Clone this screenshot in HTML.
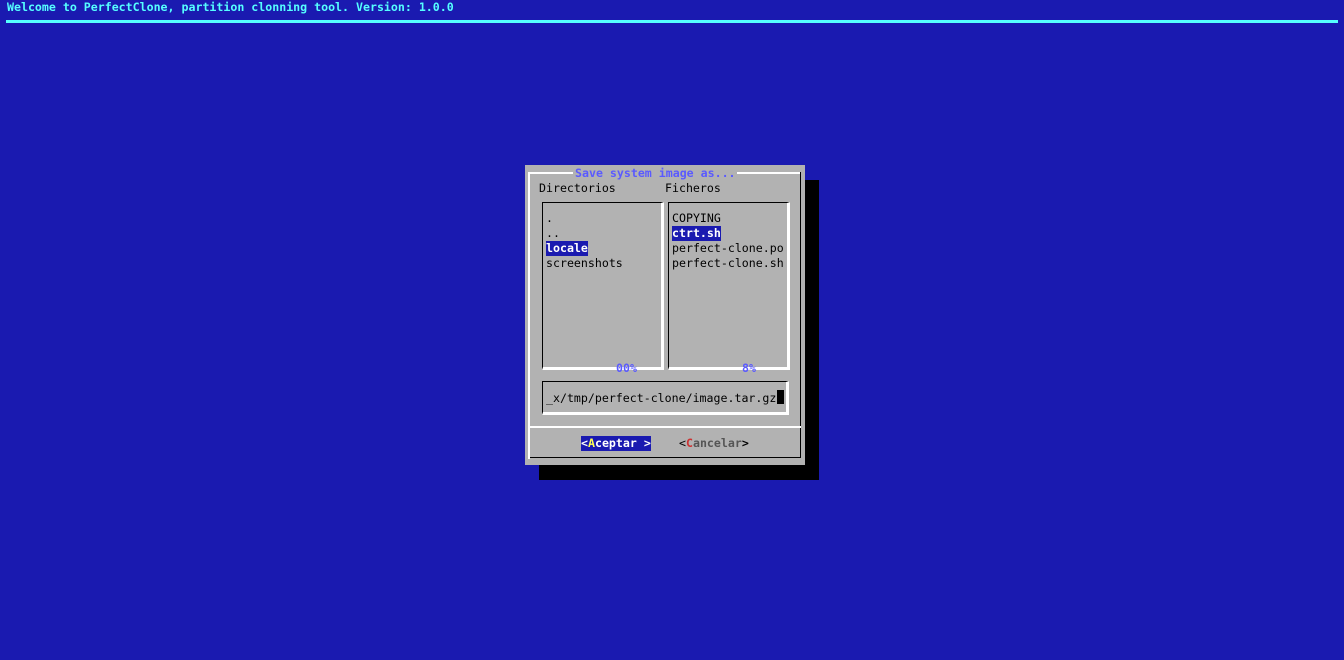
<!DOCTYPE html>
<html><head><meta charset="utf-8"><style>
html,body{margin:0;padding:0}
body{width:1344px;height:660px;background:#1a1ab0;position:relative;overflow:hidden;font-family:"DejaVu Sans Mono","Liberation Mono",monospace;font-size:11.6px;line-height:15px}
.a{position:absolute;white-space:pre}
.b{position:absolute}
.t{color:#000}
</style></head><body>
<div class="a" style="left:7px;top:0;color:#5ff;font-weight:bold">Welcome to PerfectClone, partition clonning tool. Version: 1.0.0</div>
<div class="b" style="left:6px;top:20px;width:1332px;height:3px;background:#5ff"></div>

<div class="b" style="left:539px;top:180px;width:280px;height:300px;background:#000"></div>
<div class="b" style="left:525px;top:165px;width:280px;height:300px;background:#b2b2b2"></div>
<div class="b" style="left:528px;top:172px;width:273px;height:2px;background:#fff"></div>
<div class="b" style="left:528px;top:172px;width:2px;height:287px;background:#fff"></div>
<div class="b" style="left:800px;top:172px;width:1px;height:286px;background:#000"></div>
<div class="b" style="left:530px;top:457px;width:271px;height:1px;background:#000"></div>
<div class="a" style="left:573px;top:166px;padding:0 1px 0 2px;background:#b2b2b2;color:#5a5aff;font-weight:bold">Save system image as...</div>
<div class="a t" style="left:539px;top:181px">Directorios</div>
<div class="a t" style="left:665px;top:181px">Ficheros</div>
<div class="b" style="left:542px;top:202px;width:118px;height:164px;border-left:1px solid #000;border-top:1px solid #000;border-right:3px solid #fff;border-bottom:3px solid #fff"></div>
<div class="b" style="left:668px;top:202px;width:118px;height:164px;border-left:1px solid #000;border-top:1px solid #000;border-right:3px solid #fff;border-bottom:3px solid #fff"></div>
<div class="a t" style="left:546px;top:211px">.
..</div>
<div class="a" style="left:546px;top:241px;background:#1a1ab0;color:#fff;font-weight:bold">locale</div>
<div class="a t" style="left:546px;top:256px">screenshots</div>
<div class="a t" style="left:672px;top:211px">COPYING</div>
<div class="a" style="left:672px;top:226px;background:#1a1ab0;color:#fff;font-weight:bold">ctrt.sh</div>
<div class="a t" style="left:672px;top:241px">perfect-clone.po
perfect-clone.sh</div>
<div class="a" style="left:616px;top:361px;color:#5a5aff;font-weight:bold">00%</div>
<div class="a" style="left:742px;top:361px;color:#5a5aff;font-weight:bold">8%</div>
<div class="b" style="left:542px;top:381px;width:243px;height:30px;border-left:1px solid #000;border-top:1px solid #000;border-right:3px solid #fff;border-bottom:3px solid #fff"></div>
<div class="a t" style="left:546px;top:391px">_x/tmp/perfect-clone/image.tar.gz</div>
<div class="b" style="left:777px;top:390px;width:7px;height:14px;background:#000"></div>
<div class="b" style="left:530px;top:426px;width:271px;height:2px;background:#fff"></div>
<div class="a" style="left:581px;top:436px;background:#1a1ab0;color:#fff;font-weight:bold">&lt;<span style="color:#ff5">A</span>ceptar &gt;</div>
<div class="a" style="left:679px;top:436px;color:#555;font-weight:bold"><span style="color:#000;font-weight:normal">&lt;</span><span style="color:#c33">C</span>ancelar<span style="color:#000">&gt;</span></div>
</body></html>
